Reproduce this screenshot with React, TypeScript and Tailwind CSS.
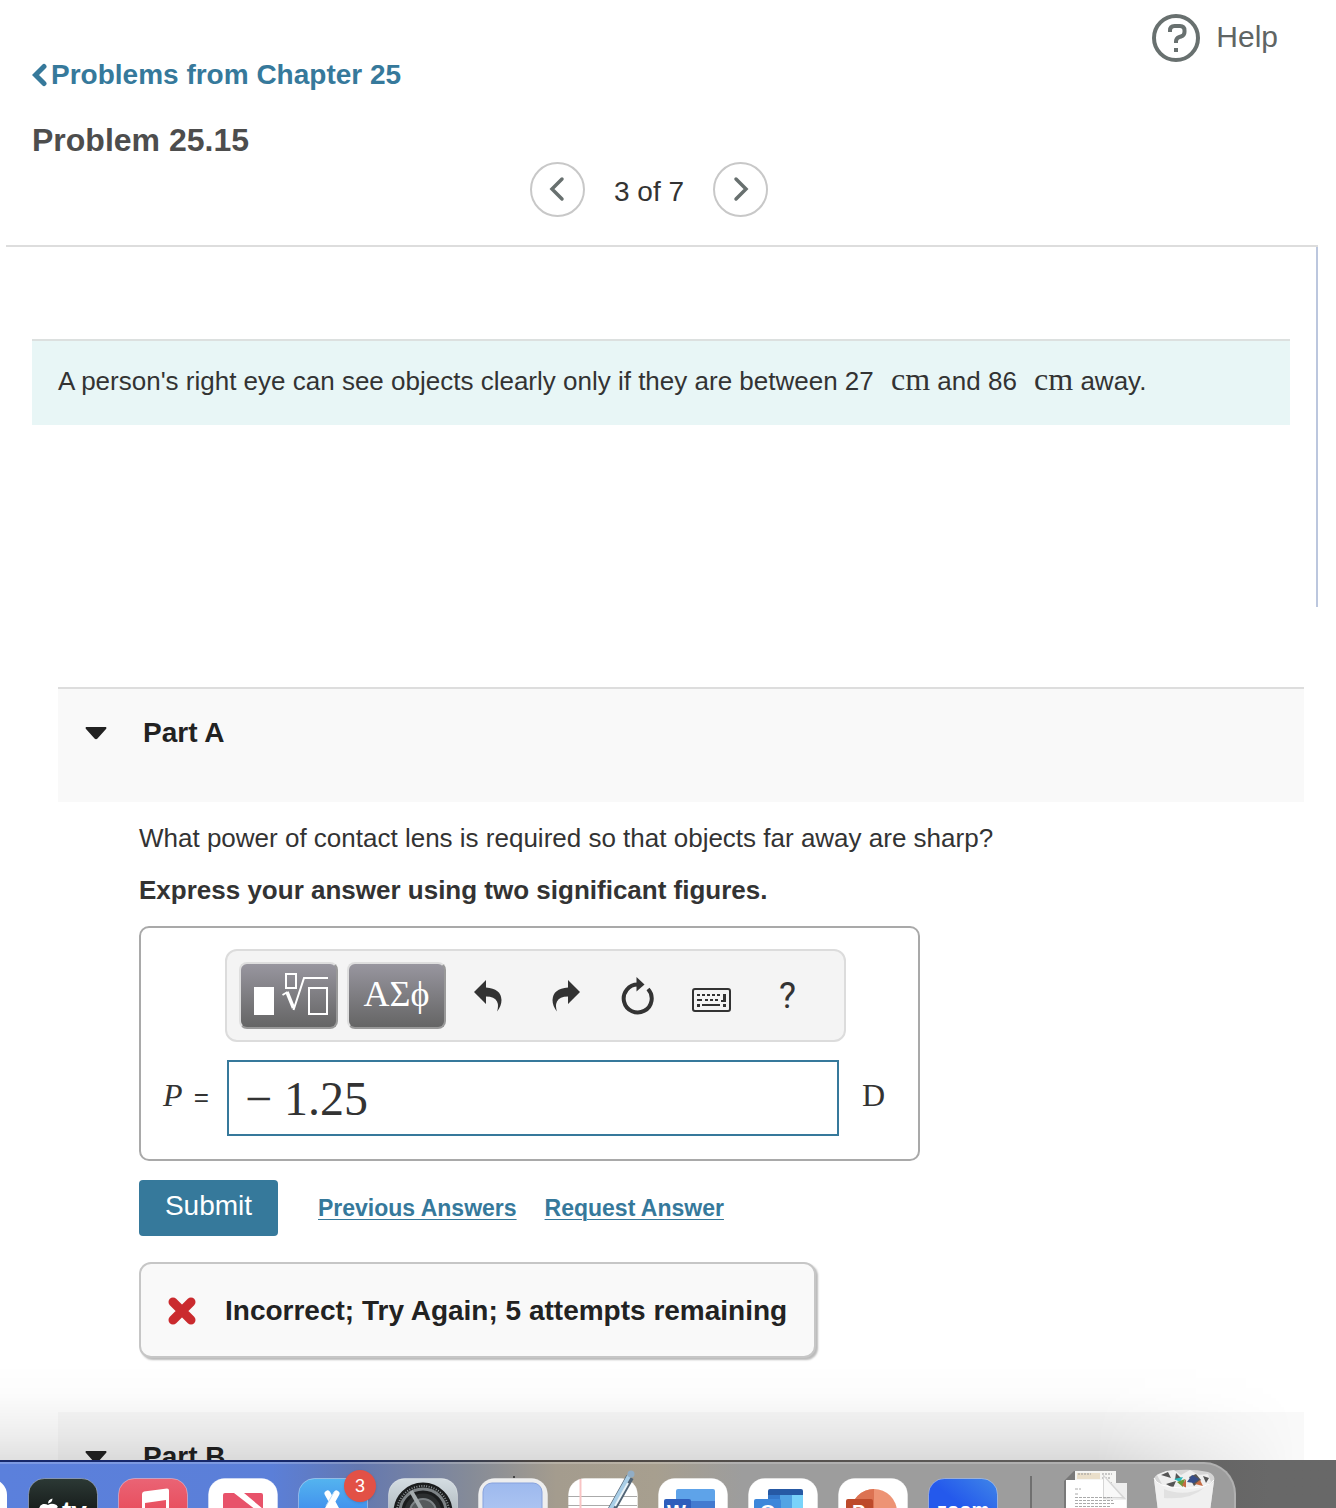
import { useState, type ReactNode } from "react";

function HelpIcon() {
  return (
    <svg width="48" height="48" viewBox="0 0 48 48" fill="none" stroke="#68706f" strokeWidth="4" aria-hidden="true">
      <circle cx="24" cy="24" r="22" />
      <path d="M18 18v-1.500q0-4.500 4.500-4.500h5.500q4.500 0 4.500 4.500v1.500q0 3.500-3.500 4.500l-2 .700q-3 1.300-3 4.300v1.500" />
      <path d="M22 34h4v4h-4z" fill="#68706f" stroke="none" />
    </svg>
  );
}

function Chevron({ right = false }: { right?: boolean }) {
  return (
    <svg width="16" height="26" viewBox="0 0 16 26" fill="none" stroke="#68706f" strokeWidth="3.500" strokeLinecap="round" strokeLinejoin="miter" aria-hidden="true">
      <path d={right ? "M3 3l10 10L3 23" : "M13 3L3 13l10 10"} />
    </svg>
  );
}

function Caret() {
  return (
    <svg width="22" height="13" viewBox="0 0 22 13" fill="#222" aria-hidden="true">
      <path d="M1 0h20q1 1 0 2l-8.500 9.500q-1.500 1.300-3 0L1 2q-1-1 0-2z" />
    </svg>
  );
}

function TemplateIcon() {
  return (
    <svg width="76" height="44" viewBox="0 0 76 44" fill="none" stroke="#fff" aria-hidden="true">
      <rect x="1" y="15" width="20" height="28" fill="#fff" stroke="none" />
      <rect x="33" y="2" width="10" height="14" strokeWidth="2" />
      <path d="M29.500 23l5-3" strokeWidth="2" />
      <path d="M34 20l6.500 16" strokeWidth="3.500" />
      <path d="M40.500 38L51 6h24" strokeWidth="2" />
      <rect x="56" y="16" width="18" height="26" strokeWidth="2" />
    </svg>
  );
}

function ArrowIcon({ flip = false }: { flip?: boolean }) {
  return (
    <svg width="28" height="32" viewBox="0 0 28 32" fill="#333" aria-hidden="true">
      <path
        transform={flip ? "matrix(-1 0 0 1 28 0)" : undefined}
        d="M0 12L12 0v7.500q15 1 15.500 12.500q0 6-4.500 11.500q2-6 0-10q-2.500-5-11-5V24z"
      />
    </svg>
  );
}

function ResetIcon() {
  return (
    <svg width="34" height="38" viewBox="0 0 34 38" aria-hidden="true">
      <path d="M18 7.500A14 14 0 1 0 28 12" fill="none" stroke="#333" strokeWidth="4" />
      <path d="M16.500 0l8 7.500l-8 7z" fill="#333" />
    </svg>
  );
}

function KeyboardIcon() {
  return (
    <svg width="39" height="24" viewBox="0 0 39 24" fill="#333" aria-hidden="true">
      <rect x="1" y="1" width="37" height="22" rx="2" fill="#f4f4f4" stroke="#333" strokeWidth="2" />
      <path d="M5 6h3v2H5zM10 6h3v2h-3zM15 6h3v2h-3zM20 6h3v2h-3zM25 6h3v2h-3zM31 6h3v8h-5v-2h2zM5 11h5v2H5zM13 11h3v2h-3zM18 11h3v2h-3zM23 11h3v2h-3zM5 16h3v3H5zM10 16h18v2H10zM31 16h3v3h-3z" />
    </svg>
  );
}

function CrossIcon() {
  return (
    <svg width="28" height="28" viewBox="0 0 28 28" fill="none" stroke="#ca2a2e" aria-hidden="true">
      <path d="M3.500 3.500l21 21M24.500 3.500l-21 21" strokeWidth="7" />
      <path d="M5 5l18 18M23 5L5 23" strokeLinecap="round" strokeWidth="9" />
    </svg>
  );
}

function Part({ title, children, bar }: { title: string; children?: ReactNode; bar: string }) {
  return (
    <section className="ml-[58px] mr-8">
      <div className={bar}>
        <button type="button" className="flex items-center gap-9 pl-[27px] text-[28px] leading-8 font-bold text-[#222]">
          <Caret />
          <h2>{title}</h2>
        </button>
      </div>
      {children}
    </section>
  );
}

function AppTile({ fill, children }: { fill: string; children?: ReactNode }) {
  return (
    <svg className="shrink-0" width="70" height="46" viewBox="0 0 70 46" overflow="hidden">
      <rect x="0.500" y="16.500" width="69" height="68" rx="16" fill={fill} stroke="#fff" strokeOpacity=".35" />
      {children}
    </svg>
  );
}

function Dock() {
  return (
    <footer className="relative h-12 overflow-hidden bg-linear-to-r from-[#16286b] from-25% via-[#4a4440] via-40% to-[#686868] to-95%">
      <div className="mt-0.5 mr-[100px] flex h-[46px] gap-5 rounded-tr-[32px] border-t-2 border-r-2 border-white/20 bg-[linear-gradient(90deg,#5b80dc_0,#5b7fd8_22%,#6478b0_29%,#858b98_38%,#a49c8e_45%,#a79f8f_53%,#9d9d9d_60%,#9d9d9d_100%)] bg-origin-border">
        <svg className="shrink-0" width="8" height="46" viewBox="62 0 8 46"><rect x="0" y="15" width="69" height="68" rx="16" fill="#fff" /></svg>
        <div className="-mt-0.5 flex gap-5">
          <svg width="0" height="0" className="absolute">
            <defs>
              <linearGradient id="tv" x2="0" y2="1"><stop stopColor="#2c3935" /><stop offset=".5" stopColor="#161b1a" /></linearGradient>
              <linearGradient id="music" x2="0" y2="1"><stop stopColor="#ea6475" /><stop offset=".6" stopColor="#e84858" /></linearGradient>
              <linearGradient id="store" x2="0" y2="1"><stop stopColor="#54b4ef" /><stop offset=".6" stopColor="#3c87ed" /></linearGradient>
              <linearGradient id="gear" x2="0" y2="1"><stop stopColor="#d4dde2" /><stop offset=".6" stopColor="#aab4ba" /></linearGradient>
              <linearGradient id="zoomBlue" x1="1" x2=".6" y2=".5"><stop stopColor="#3f86e8" /><stop offset="1" stopColor="#2459ec" /></linearGradient>
              <linearGradient id="screen" x2="0" y2="1"><stop stopColor="#9db9ee" /><stop offset="1" stopColor="#b8cdf4" /></linearGradient>
            </defs>
          </svg>
          <AppTile fill="url(#tv)">
            <path d="M11 48q0-5 4-6q3-.500 5 1q3-2 6-1q3 .500 4 3q-2 1-2 3zM20 41.500q0-4 4.500-5q0 4-4.500 5z" fill="#fff" />
            <text x="34" y="59" fontFamily="Liberation Sans" fontWeight="700" fontSize="28" fill="#fff">tv</text>
          </AppTile>
          <AppTile fill="url(#music)">
            <path d="M24 46V32q0-2 2-2.500l23-3q2 0 2 2v20h-3V38l-21 3v8h-3z" fill="#fff" />
          </AppTile>
          <AppTile fill="#fff">
            <path d="M15 48V33q0-2 2-2h9l22 17zM36 31h17q2 0 2 2v14z" fill="#e8526a" />
          </AppTile>
          <div className="relative">
            <AppTile fill="url(#store)">
              <path d="M29.500 31.500l10 18M38.500 31.500l-10 18" stroke="#fff" strokeWidth="6" strokeLinecap="round" />
              <path d="M36 30l-8 14" stroke="#b9dcfa" strokeWidth="1" />
            </AppTile>
            <span className="absolute top-2 -right-2 flex size-8 items-center justify-center rounded-full bg-[#e25146] font-['Liberation_Sans'] text-lg text-white shadow">3</span>
          </div>
          <AppTile fill="url(#gear)">
            <circle cx="35" cy="50" r="27" fill="#7d8386" stroke="#1a1c1d" strokeWidth="5" />
            <circle cx="35" cy="50" r="26" fill="none" stroke="#8d9598" strokeWidth="2" strokeDasharray="1 1.500" />
            <circle cx="35" cy="50" r="20" fill="#2b2e2f" stroke="#1a1c1d" strokeWidth="3" />
            <circle cx="35" cy="50" r="13" fill="#555a5c" stroke="#7d8386" strokeWidth="2" />
            <path d="M23 29l12 21" stroke="#a5acae" strokeWidth="4" />
          </AppTile>
          <AppTile fill="#eeeeee">
            <rect x="5" y="21" width="59" height="50" rx="9" fill="url(#screen)" stroke="#87a2dd" />
            <path d="M36 14v2" stroke="#444" strokeWidth="2" />
          </AppTile>
          <AppTile fill="#fff">
            <path d="M0 34.500h69M0 43.500h69" stroke="#aaa" />
            <path d="M12.500 17v30" stroke="#f8c4c4" strokeWidth="2" />
            <path d="M43 49L62 15" stroke="#526475" strokeWidth="8" />
            <path d="M42 48L61 14" stroke="#a9cee7" strokeWidth="4" />
            <path d="M47 44L60 21" stroke="#e9f3f9" strokeWidth="2" />
            <circle cx="63" cy="12" r="3.500" fill="#91adc5" />
          </AppTile>
          <AppTile fill="#fff">
            <path d="M18 39V29q0-2 2-2h35q2 0 2 2v10z" fill="#5ea3e9" /><path d="M18 39h39v10H18z" fill="#437bd0" />
            <rect x="6" y="37" width="27" height="27" rx="2" fill="#2e5ebc" />
            <text x="9" y="57" fontFamily="Liberation Sans" fontWeight="700" fontSize="20" fill="#fff">W</text>
          </AppTile>
          <AppTile fill="#fff">
            <path d="M20 34v-5q0-2 2-2h31q2 0 2 2v5z" fill="#2659a4" />
            <path d="M20 33h12v14H20z" fill="#3478cb" /><path d="M32 33h12v14H32z" fill="#52a4e4" /><path d="M44 33h11v14H44z" fill="#79d3fa" />
            <rect x="6" y="37" width="27" height="27" rx="2" fill="#3d87da" />
            <text x="12" y="57" fontFamily="Liberation Sans" fontWeight="700" fontSize="20" fill="#fff">O</text>
          </AppTile>
          <AppTile fill="#fff">
            <circle cx="36" cy="50" r="23" fill="#ed9374" /><path d="M36 27v23H13a23 23 0 0 1 23-23z" fill="#dc7252" />
            <rect x="8" y="37" width="27" height="27" rx="2" fill="#bd4a2b" />
            <text x="14" y="57" fontFamily="Liberation Sans" fontWeight="700" fontSize="20" fill="#fff">P</text>
          </AppTile>
          <AppTile fill="url(#zoomBlue)">
            <text x="9" y="55" fontFamily="Liberation Sans" fontWeight="700" fontSize="20" fill="#fff">zoom</text>
          </AppTile>
        </div>
        <div className="mt-3 ml-3 w-0.5 shrink-0 bg-[#707070]" />
        <svg className="ml-3 shrink-0" width="64" height="44" viewBox="0 0 64 44">
          <path d="M0 17l10-10h4v37H0z" fill="#555" opacity=".5" />
          <path d="M11 7h41v30H11z" fill="#f5f5f3" />
          <path d="M13 9h23v6H13z" fill="#eadfca" />
          <path d="M14 10h13M38 10h10M38 14h8M38 19h10" stroke="#999" strokeDasharray="2 1" />
          <path d="M42 19h21v26H42z" fill="#eee" />
          <path d="M2 16h37v20h23v10H2z" fill="#fff" />
          <path d="M39 10l23 25q-12-2-23 0z" fill="#d6d6d6" />
          <path d="M40 13l18 20H40z" fill="#f9f9f9" />
          <path d="M11 25h6M11 30h4M11 33.500h37M11 36.500h38M11 39.500h39M11 42.500h35" stroke="#aaa" strokeDasharray="3 1" />
        </svg>
        <svg className="ml-1 shrink-0" width="64" height="44" viewBox="0 0 64 44">
          <path d="M2 15q1-6 16-8q20-3 38 1q8 3 6 9l-4 30H6z" fill="#d5d5d5" />
          <path d="M5 11l9-4l8-1l7 5l9-5l9 5l9-1l3 8l-9 6H12z" fill="#efefef" />
          <path d="M9 11l7-3l3 6zM24 9l5 5l-6 2zM37 13l7-3l5 6l-7 6zM51 12l6 2l-3 5zM14 20l10-3l-3 7z" fill="#555" />
          <path d="M22 15l9-2l-3 5z" fill="#29bcc0" /><path d="M25 18l6 5l2-8z" fill="#6c9a38" /><path d="M35 18l5-7l7 4l-5 4z" fill="#364e8b" /><path d="M30 21l4-6v9zM43 20l5-4l3 6z" fill="#c66a42" />
          <path d="M2 15q3 8 28 9t32-7l-4 30H6z" fill="#f0f0f0" />
          <path d="M12 25q19 8 40-1q-13 12-40 10z" fill="#e1e1e1" />
          <path d="M2 14q2 9 28 10t32-8" fill="none" stroke="#fff" />
        </svg>
      </div>
    </footer>
  );
}

export default function App() {
  const [answer, setAnswer] = useState("− 1.25");
  const toolButton =
    "flex h-[67px] w-[99px] items-center justify-center rounded-lg border-2 border-t-[#dedede] border-l-[#dedede] border-r-[#999] border-b-[#999] bg-linear-to-b from-[#98969f] to-[#656565] pb-1 text-white";
  return (
    <div className="flex min-h-screen flex-col bg-white font-['Liberation_Sans',Arial,sans-serif] text-[#333]">
      <main className="relative grow overflow-hidden">
        <header>
          <div className="flex justify-end pt-[14px] pr-[58px]">
            <a href="#help" className="flex items-center gap-4 text-[30px] leading-8 text-[#5f6564]">
              <HelpIcon />
              <span className="pb-0.5">Help</span>
            </a>
          </div>
          <div className="pl-8">
            <a href="#chapter" className="inline-flex h-[26px] items-center gap-1 align-top text-[28px] leading-[26px] font-bold text-[#36799b]">
              <svg width="15" height="24" viewBox="0 0 15 24" fill="none" stroke="currentColor" strokeWidth="5" strokeLinecap="round" aria-hidden="true">
                <path d="M12 3.500L3.500 12l8.500 8.500" />
              </svg>
              Problems from Chapter 25
            </a>
            <h1 className="mt-8 text-[32px] leading-10 font-bold text-[#4d4d4d]">Problem 25.15</h1>
          </div>
          <nav className="mr-[38px] flex items-center justify-center pt-0.5 pb-7" aria-label="Problem navigation">
            <button type="button" aria-label="Previous problem" className="flex size-[55px] items-center justify-center rounded-full border-2 border-[#c8c8c8] pb-0.5">
              <Chevron />
            </button>
            <span className="px-[29px] pt-1 text-[28px] leading-8">3 of 7</span>
            <button type="button" aria-label="Next problem" className="flex size-[55px] items-center justify-center rounded-full border-2 border-[#c8c8c8] pb-0.5">
              <Chevron right />
            </button>
          </nav>
        </header>

        <div className="mr-[18px] ml-1.5 border-t-2 border-t-[#ddd]">
          <div className="border-r-2 border-[#bcc7de] pt-[92px] pr-[26px] pb-[182px] pl-[26px]">
            <p className="border-t-2 border-[#dce0df] bg-[#e8f6f6] px-[26px] pt-[22px] pb-7 text-[26px] leading-8">
              A person's right eye can see objects clearly only if they are between 27&nbsp;
              <span className="ml-2.5 font-['Liberation_Serif',serif] text-[32px]">cm</span> and 86&nbsp;
              <span className="ml-2.5 font-['Liberation_Serif',serif] text-[32px]">cm</span> away.
            </p>
          </div>
        </div>

        <div className="pt-20">
          <Part title="Part A" bar="border-t-2 border-[#ddd] bg-[#f9f9f9] pt-7 pb-[53px]">
            <div className="pl-[81px]">
              <p className="pt-5 text-[26px] leading-8">What power of contact lens is required so that objects far away are sharp?</p>
              <p className="pt-5 text-[26px] leading-8 font-bold">Express your answer using two significant figures.</p>
              <div className="mt-5 w-fit rounded-[10px] border-2 border-[#a9a9a9] pt-[21px] pr-[33px] pb-[23px] pl-[22px]">
                <div className="ml-[62px] flex h-[93px] w-[621px] items-center rounded-xl border-2 border-[#dcdcdc] bg-[#f4f4f4] pl-3">
                  <button type="button" aria-label="Templates" className={toolButton + " pl-1"}><TemplateIcon /></button>
                  <button type="button" aria-label="Symbols" className={toolButton + " ml-[9px] font-['Liberation_Serif',serif] text-[36px] leading-10"}>ΑΣϕ</button>
                  <button type="button" aria-label="Undo" className="ml-7"><ArrowIcon /></button>
                  <button type="button" aria-label="Redo" className="ml-[50px]"><ArrowIcon flip /></button>
                  <button type="button" aria-label="Reset" className="ml-10"><ResetIcon /></button>
                  <button type="button" aria-label="Keyboard shortcuts" className="mt-2 ml-[38px]"><KeyboardIcon /></button>
                  <button type="button" aria-label="Help" className="ml-12 font-[Roboto,sans-serif] text-[36px] leading-10">?</button>
                </div>
                <div className="mt-[18px] flex items-center">
                  <label htmlFor="power" className="w-16 pb-1 text-[26px] leading-8">
                    <span className="mr-1 font-['Liberation_Serif',serif] text-[32px] italic">P</span> =
                  </label>
                  <input
                    id="power"
                    value={answer}
                    onChange={(e) => setAnswer(e.target.value)}
                    className="h-[76px] w-[612px] border-2 border-[#36799b] bg-white px-4 font-['Liberation_Serif',serif] text-[48px] leading-[56px] outline-none"
                  />
                  <span className="ml-[23px] pb-1.5 font-['Liberation_Serif',serif] text-[32px] leading-8">D</span>
                </div>
              </div>
              <div className="mt-[19px] flex items-center">
                <button type="button" className="h-14 w-[139px] rounded bg-[#36799b] pb-1 text-[28px] leading-8 text-white">Submit</button>
                <a href="#previous" className="ml-10 text-[23px] leading-8 font-bold text-[#36799b] underline decoration-1 underline-offset-3">Previous Answers</a>
                <a href="#request" className="ml-7 text-[23px] leading-8 font-bold text-[#36799b] underline decoration-1 underline-offset-3">Request Answer</a>
              </div>
              <div role="status" className="mt-[26px] flex h-24 w-fit items-center gap-[29px] rounded-xl border-2 border-[#c6c6c6] bg-[#f9f9f9] px-[27px] pt-0.5 text-[28px] leading-8 font-bold text-[#222] shadow-[2px_2px_2px_#bbb]">
                <CrossIcon />
                Incorrect; Try Again; 5 attempts remaining
              </div>
            </div>
          </Part>
          <div className="mt-[54px] h-12 overflow-hidden">
            <Part title="Part B" bar="bg-[#f9f9f9] pt-[29px] pb-[53px]" />
          </div>
        </div>
        <div className="pointer-events-none absolute inset-x-0 bottom-0 h-24 bg-[linear-gradient(180deg,rgb(0_0_0/0)_0%,rgb(0_0_0/.012)_30%,rgb(0_0_0/.035)_50%,rgb(0_0_0/.07)_75%,rgb(0_0_0/.12)_100%)] mask-r-from-82% mask-r-to-97%" />
      </main>
      <Dock />
    </div>
  );
}
